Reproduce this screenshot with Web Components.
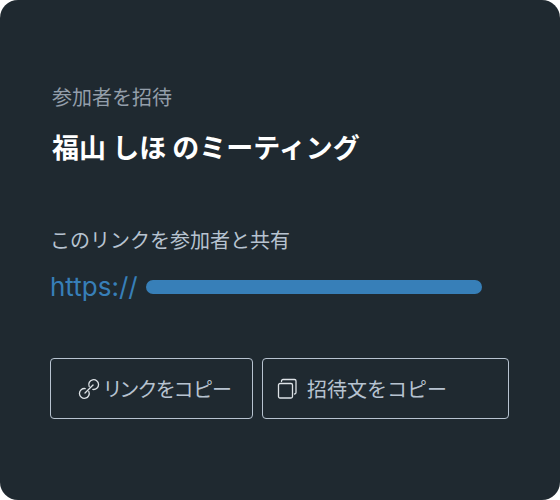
<!DOCTYPE html>
<html lang="ja">
<head>
<meta charset="utf-8">
<meta name="viewport" content="width=device-width, initial-scale=1">
<title>参加者を招待</title>
<style>
    body {
        margin: 0;
        background-color: #ffffff;
        font-family: "Noto Sans CJK JP", sans-serif;
    }
</style>
</head>
<body>
<invite-card>
    <span slot="label">参加者を招待</span>
    <span slot="title">福山 しほ のミーティング</span>
    <share-link>
        <span slot="label">このリンクを参加者と共有</span>
    </share-link>
    <copy-actions></copy-actions>
</invite-card>

<script>
class InviteCard extends HTMLElement {
    constructor() {
        super();
        this.shadowDOM = this.attachShadow({ mode: 'open' });
    }

    connectedCallback() {
        this.render();
    }

    render() {
        this.shadowDOM.innerHTML = `
            <style>
                :host {
                    display: flex;
                    flex-direction: column;
                    box-sizing: border-box;
                    min-height: 100vh;
                    padding: 81px 51px 80px 50px;
                    border-radius: 18px;
                    background-color: #1f2930;
                }

                header {
                    padding-left: 2px;
                }

                p {
                    margin: 0;
                    font-size: 20px;
                    line-height: 32px;
                    color: #939eaa;
                }

                h1 {
                    margin: 14px 0 0;
                    font-size: 27px;
                    line-height: 40px;
                    font-weight: bold;
                    color: #ffffff;
                }
            </style>
            <header>
                <p><slot name="label"></slot></p>
                <h1><slot name="title"></slot></h1>
            </header>
            <slot></slot>
        `;
    }
}

class ShareLink extends HTMLElement {
    constructor() {
        super();
        this.shadowDOM = this.attachShadow({ mode: 'open' });
    }

    connectedCallback() {
        this.render();
    }

    render() {
        this.shadowDOM.innerHTML = `
            <style>
                :host {
                    display: block;
                    margin-top: 57px;
                }

                p {
                    margin: 0;
                    font-size: 20px;
                    line-height: 32px;
                    color: #b7c3d0;
                }

                a {
                    display: flex;
                    align-items: center;
                    gap: 8px;
                    margin-top: 14px;
                    padding-right: 27px;
                    font-family: Inter, sans-serif;
                    font-size: 26px;
                    line-height: 34px;
                    color: #377fb8;
                    text-decoration: none;
                }

                .bar {
                    flex: 1;
                    height: 14px;
                    border-radius: 7px;
                    background-color: #377fb8;
                }
            </style>
            <p><slot name="label"></slot></p>
            <a href="#">https://<span class="bar"></span></a>
        `;
    }
}

class CopyActions extends HTMLElement {
    constructor() {
        super();
        this.shadowDOM = this.attachShadow({ mode: 'open' });
    }

    connectedCallback() {
        this.render();
    }

    render() {
        this.shadowDOM.innerHTML = `
            <style>
                :host {
                    display: grid;
                    grid-template-columns: 9fr 11fr;
                    gap: 9px;
                    margin-top: 54px;
                }

                button {
                    display: flex;
                    align-items: center;
                    box-sizing: border-box;
                    min-height: 61px;
                    padding: 0 20px 0 27px;
                    border: 1px solid #b7c3d0;
                    border-radius: 4px;
                    background: none;
                    font-family: inherit;
                    font-size: 20px;
                    line-height: 32px;
                    color: #b7c3d0;
                    white-space: nowrap;
                    cursor: pointer;
                }

                .link {
                    gap: 4px;
                    font-feature-settings: "palt";
                }

                .text {
                    gap: 8px;
                    padding-left: 14px;
                }

                svg {
                    flex: none;
                    fill: none;
                    stroke: #dde2e6;
                    stroke-width: 1.3;
                    stroke-linecap: round;
                    stroke-linejoin: round;
                }
            </style>
            <button class="link" type="button">
                <svg width="22" height="22" viewBox="0 0 22 22" aria-hidden="true">
                    <path d="M11.2 8.6A4.9 4.9 0 1 1 14.8 11.4"/>
                    <path d="M10.8 13.4A4.9 4.9 0 1 1 7.2 10.6"/>
                    <path d="M7 15L15 7"/>
                </svg>
                リンクをコピー
            </button>
            <button class="text" type="button">
                <svg width="22" height="22" viewBox="0 0 22 22" aria-hidden="true">
                    <rect x="1.5" y="5.5" width="14" height="14.5" rx="1.5"/>
                    <path d="M4.5 3.5V3A1.5 1.5 0 0 1 6 1.5H17.5A1.5 1.5 0 0 1 19 3V14.5A1.5 1.5 0 0 1 17.5 16"/>
                </svg>
                招待文をコピー
            </button>
        `;
    }
}

customElements.define('invite-card', InviteCard);
customElements.define('share-link', ShareLink);
customElements.define('copy-actions', CopyActions);
</script>
</body>
</html>
